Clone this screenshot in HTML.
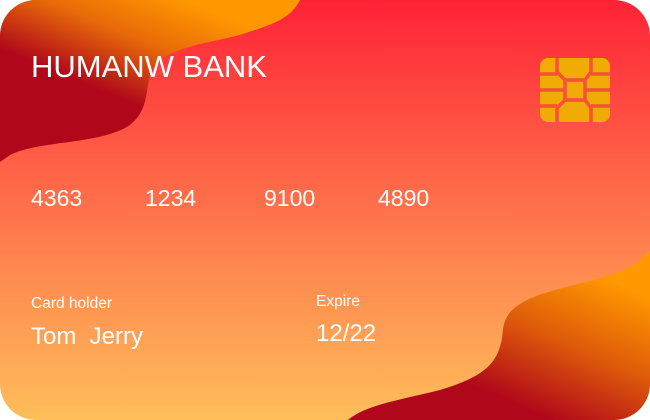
<!DOCTYPE html>
<html><head><style>
html,body{margin:0;padding:0;background:#fff;}
.card{position:relative;width:650px;height:420px;border-radius:36px;overflow:hidden;background:linear-gradient(180deg,#ff2236 0%,#ff5a45 35%,#ff8a50 65%,#ffbe5a 100%);font-family:"Liberation Sans",sans-serif;color:#fff;}
svg.bg{position:absolute;left:0;top:0}
.t{position:absolute;white-space:nowrap;line-height:1}
</style></head><body>
<div class="card">
<svg class="bg" width="650" height="420" viewBox="0 0 650 420">
<defs>
<linearGradient id="g1" x1="0.75" y1="0.1" x2="0.25" y2="0.75">
<stop offset="0" stop-color="#ff9800"/><stop offset="0.35" stop-color="#e86a08"/><stop offset="0.75" stop-color="#b0081a"/><stop offset="1" stop-color="#b0081a"/></linearGradient>
<linearGradient id="g2" x1="0.9" y1="0.2" x2="0.3" y2="0.95">
<stop offset="0" stop-color="#ff9800"/><stop offset="0.4" stop-color="#dd5a0a"/><stop offset="0.8" stop-color="#b0081a"/><stop offset="1" stop-color="#b0081a"/></linearGradient>
</defs>
<path d="M0 0 L300 0 C290 20 270 25 240 35 C200 45 160 48 150 75 C145 95 148 110 130 125 C100 145 40 140 10 155 L0 162 Z" fill="url(#g1)"/>
<path d="M650 250 C630 275 590 280 555 290 C520 300 505 310 503 330 C500 360 490 375 440 390 C400 400 365 405 348 420 L650 420 Z" fill="url(#g2)"/>
<g>
<rect x="540" y="58" width="70" height="64" rx="8" fill="#f2ab05"/>
<g stroke="#f8503a" stroke-width="3.5" fill="none" stroke-linejoin="round">
<path d="M540 74 H557 M540 90 H565 M540 106 H557 M591 74 H610 M585 90 H610 M591 106 H610"/>
<path d="M557 58 V72 L565 80 V100 L557 108 V122"/>
<path d="M591 58 V72 L585 80 V100 L591 108 V122"/>
<path d="M565 80 H585 M565 100 H585"/>
</g>
</g>
</svg>
<div class="t" style="left:31px;top:51px;font-size:31px;">HUMANW BANK</div>
<div class="t" style="left:31px;top:187px;font-size:23px;">4363</div>
<div class="t" style="left:145px;top:187px;font-size:23px;">1234</div>
<div class="t" style="left:264px;top:187px;font-size:23px;">9100</div>
<div class="t" style="left:378px;top:187px;font-size:23px;">4890</div>
<div class="t" style="left:31px;top:296px;font-size:15.5px;">Card holder</div>
<div class="t" style="left:31px;top:325px;font-size:24px;">Tom&nbsp; Jerry</div>
<div class="t" style="left:316px;top:294px;font-size:15.5px;">Expire</div>
<div class="t" style="left:316px;top:322px;font-size:24px;">12/22</div>
</div>
</body></html>
